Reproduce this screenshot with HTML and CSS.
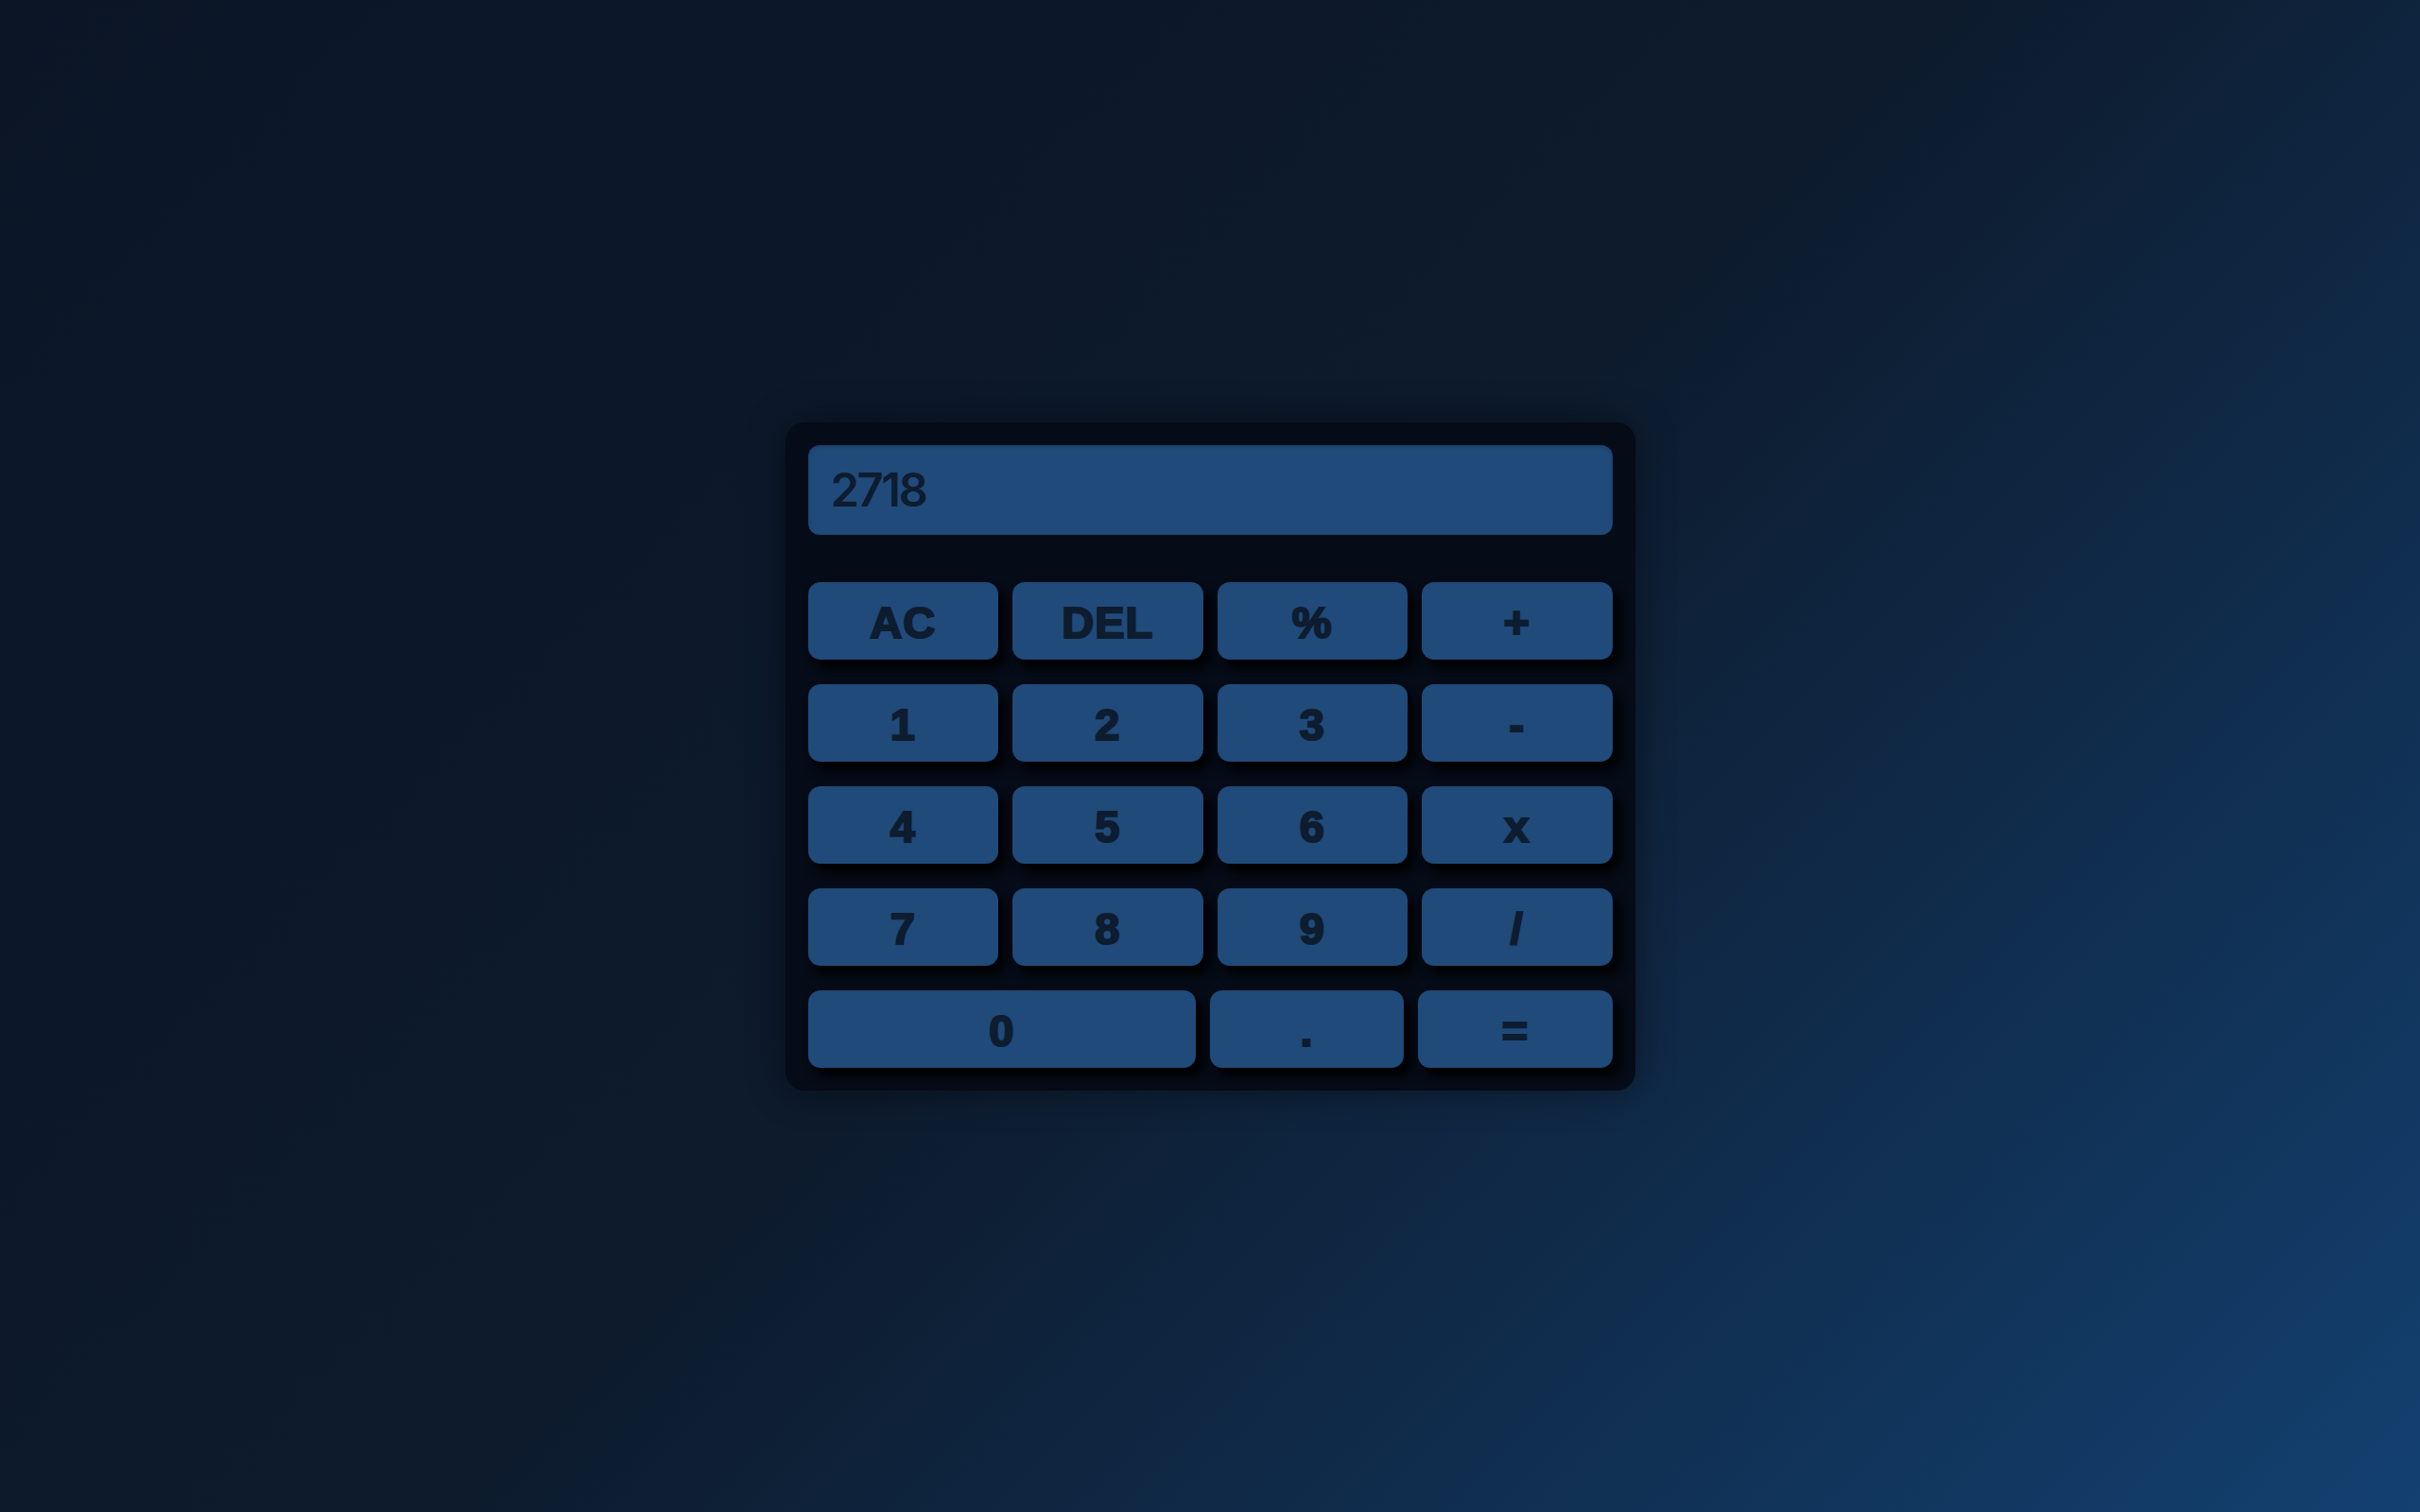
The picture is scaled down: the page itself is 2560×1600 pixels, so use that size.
FILE: index.html
```html
<!DOCTYPE html>
<html lang="en">
<head>
<meta charset="utf-8">
<title>Calculator</title>
<link rel="stylesheet" href="styles.css">
</head>
<body>
<main class="page">
  <div class="calculator">
    <div class="display">2718</div>
    <div class="keys">
      <div class="row">
        <button class="key">AC</button>
        <button class="key">DEL</button>
        <button class="key">%</button>
        <button class="key">+</button>
      </div>
      <div class="row">
        <button class="key">1</button>
        <button class="key">2</button>
        <button class="key">3</button>
        <button class="key">-</button>
      </div>
      <div class="row">
        <button class="key">4</button>
        <button class="key">5</button>
        <button class="key">6</button>
        <button class="key">x</button>
      </div>
      <div class="row">
        <button class="key">7</button>
        <button class="key">8</button>
        <button class="key">9</button>
        <button class="key">/</button>
      </div>
      <div class="row">
        <button class="key key-wide">0</button>
        <button class="key">.</button>
        <button class="key">=</button>
      </div>
    </div>
  </div>
</main>
</body>
</html>
```

FILE: styles.css
```css
* { box-sizing: border-box; }

html, body {
  margin: 0;
  padding: 0;
  height: 100%;
}

body {
  background: linear-gradient(135deg, #0b1526 0%, #0d1b2d 50%, #134070 100%);
  font-family: "Liberation Sans", Arial, sans-serif;
}

.page {
  width: 100%;
  height: 100%;
  display: flex;
  align-items: center;
  justify-content: center;
}

.calculator {
  width: 899px;
  padding: 24px;
  background: #050b17;
  border-radius: 20px;
  box-shadow: 0 0 40px rgba(0, 0, 0, 0.45);
}

.display {
  height: 95px;
  background: #1f4a7a;
  border-radius: 12px;
  padding: 0 24px;
  display: flex;
  align-items: center;
  font-family: Inter, "Open Sans", sans-serif;
  font-weight: 600;
  font-size: 49px;
  letter-spacing: -2.5px;
  color: #0e1c2f;
  box-shadow: inset 0 2px 4px rgba(0, 0, 0, 0.15);
}

.keys {
  margin-top: 50px;
  display: flex;
  flex-direction: column;
  gap: 26px;
}

.row {
  display: flex;
  gap: 15px;
}

.key {
  flex: 1 1 0;
  height: 82px;
  border: none;
  border-radius: 13px;
  background: #1f4a7a;
  color: #0e1c2f;
  font-family: "Liberation Sans", Arial, sans-serif;
  font-weight: 700;
  font-size: 47px;
  letter-spacing: 1px;
  -webkit-text-stroke: 2.2px #0e1c2f;
  padding: 4px 0 0;
  box-shadow: 7px 9px 12px #000;
  cursor: pointer;
}

.key-wide {
  flex: 2 1 0;
}
```
